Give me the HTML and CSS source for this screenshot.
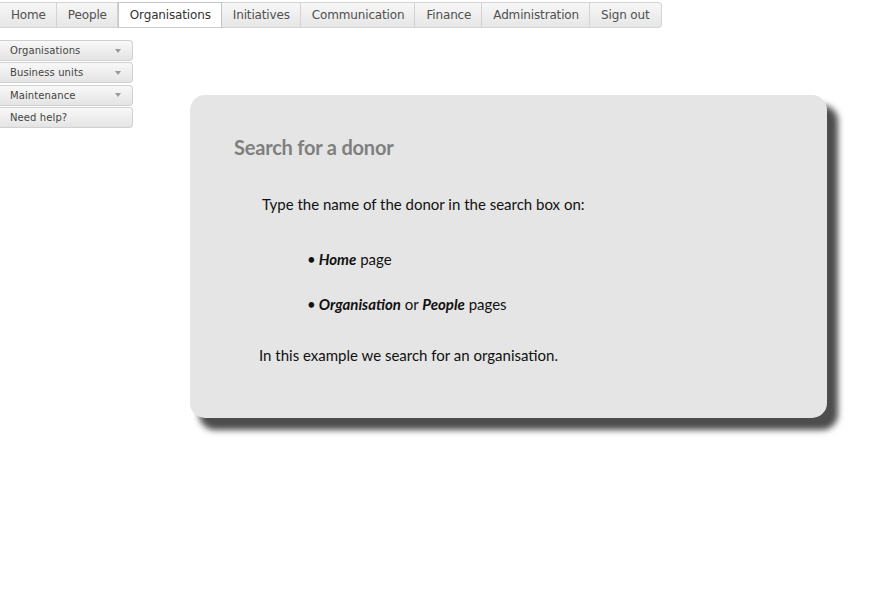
FILE: index.html
```html
<!DOCTYPE html>
<html>
<head>
<meta charset="utf-8">
<link rel="stylesheet" href="styles.css">
</head>
<body>
<nav class="topnav">
  <a class="tab">Home</a>
  <a class="tab">People</a>
  <a class="tab active">Organisations</a>
  <a class="tab">Initiatives</a>
  <a class="tab">Communication</a>
  <a class="tab">Finance</a>
  <a class="tab">Administration</a>
  <a class="tab last">Sign out</a>
</nav>
<div class="main">
  <aside class="sidemenu">
    <div class="sitem"><span>Organisations</span><span class="arrow"></span></div>
    <div class="sitem"><span>Business units</span><span class="arrow"></span></div>
    <div class="sitem"><span>Maintenance</span><span class="arrow"></span></div>
    <div class="sitem"><span>Need help?</span></div>
  </aside>
  <section class="card">
    <h1 class="title">Search for a donor</h1>
    <p class="intro">Type the name of the donor in the search box on:</p>
    <ul class="list">
      <li><b><i>Home</i></b> page</li>
      <li><b><i>Organisation</i></b> or <b><i>People</i></b> pages</li>
    </ul>
    <p class="outro">In this example we search for an organisation.</p>
  </section>
</div>
</body>
</html>
```
FILE: styles.css
```css
html, body { margin: 0; padding: 0; background: #fff; }
body { font-family: "DejaVu Sans", Verdana, sans-serif; min-height: 100vh; }
.topnav {
  display: flex;
  margin-top: 2px;
  height: 26px;
  width: max-content;
  border: 1px solid #d3d3d3;
  border-left: none;
  border-radius: 0 4px 4px 0;
  background: linear-gradient(#f7f7f7, #e6e6e6);
  box-sizing: border-box;
}
.tab {
  display: flex;
  align-items: center;
  padding: 0 10px 0 11px;
  font-size: 12px;
  color: #505050;
  border-right: 1px solid #d3d3d3;
  letter-spacing: -0.15px;
}
.tab.last { border-right: none; padding-right: 12px; }
.tab.active {
  background: #fff;
  color: #333;
  margin: -1px 0;
  border: 1px solid #c4c4c4;
  border-bottom-color: #ccc;
}
.main { display: flex; align-items: flex-start; padding-bottom: 40px; }
.sidemenu {
  margin-top: 12px;
  width: 133px;
  display: flex;
  flex-direction: column;
}
.sitem {
  height: 21px;
  box-sizing: border-box;
  border: 1px solid #d0d0d0;
  border-left: none;
  border-radius: 0 4px 4px 0;
  background: linear-gradient(#f8f8f8, #e4e4e4);
  margin-bottom: 1.3px;
  display: flex;
  align-items: center;
  justify-content: space-between;
  padding: 0 11px 0 10px;
  font-size: 10px;
  color: #444;
  letter-spacing: 0.1px;
}
.arrow {
  width: 0; height: 0;
  border-left: 3.5px solid transparent;
  border-right: 3.5px solid transparent;
  border-top: 4px solid #9a9a9a;
}
.card {
  margin: 67px 0 0 57px;
  width: 637px;
  height: 323px;
  box-sizing: border-box;
  background: #e5e5e5;
  border-radius: 15px;
  box-shadow: 10px 11px 6px 1px #4d4d4d;
  padding: 40px 0 0 44px;
  font-family: Lato, "Open Sans", sans-serif;
  color: #111;
}
.title {
  margin: 0;
  font-size: 20px;
  font-weight: bold;
  color: #7f7f7f;
  letter-spacing: -0.2px;
}
.intro { margin: 36px 0 0 28px; font-size: 15px; }
.list { margin: 37px 0 0 73px; padding: 0; list-style: none; font-size: 15px; }
.list li { margin-bottom: 27px; }
.list li::before { content: "\2022"; margin-right: 3px; }
.outro { margin: 33px 0 0 25px; font-size: 15px; }
```
